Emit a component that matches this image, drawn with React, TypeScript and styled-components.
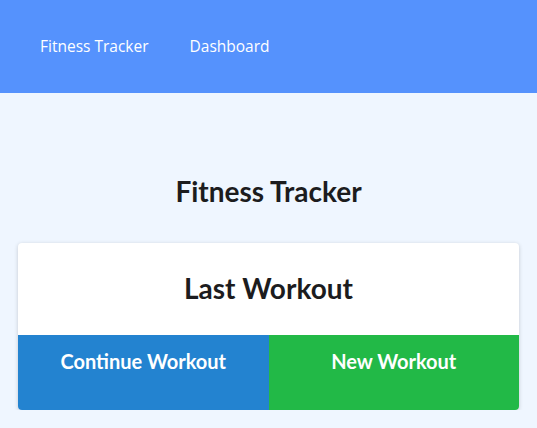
import React from "react";
import styled, { createGlobalStyle } from "styled-components";

const Global = createGlobalStyle`
  html, body { margin: 0; padding: 0; }
  body { background: #eff6ff; font-family: Lato, "Open Sans", sans-serif; color: #1c1c1e; }
`;

const Nav = styled.nav`
  height: 93px;
  background: #5592fd;
  display: flex;
  align-items: center;
  padding: 0 40px 2px;
  gap: 41px;
  box-sizing: border-box;
`;

const NavLink = styled.a`
  font-family: "Open Sans", sans-serif;
  font-size: 15.5px;
  color: #ffffff;
  text-decoration: none;
`;

const Main = styled.main`
  padding: 78px 18px 0;
  display: flex;
  flex-direction: column;
  align-items: center;
`;

const Title = styled.h1`
  margin: 0 0 32px;
  font-size: 28px;
  font-weight: 700;
  line-height: 40px;
`;

const Card = styled.section`
  width: 100%;
  background: #fff;
  border-radius: 4px;
  box-shadow: 0 1px 4px rgba(0, 0, 0, 0.18);
  overflow: hidden;
`;

const CardHeader = styled.h2`
  margin: 0;
  height: 92px;
  padding-bottom: 2px;
  box-sizing: border-box;
  display: flex;
  align-items: center;
  justify-content: center;
  font-size: 28px;
  font-weight: 700;
`;

const Actions = styled.div`
  display: grid;
  grid-template-columns: 1fr 1fr;
`;

const ActionButton = styled.button<{ $bg: string }>`
  border: none;
  background: ${(p) => p.$bg};
  color: #fff;
  font-family: Lato, sans-serif;
  font-weight: 700;
  font-size: 20px;
  height: 75px;
  padding: 14px 0 0;
  display: flex;
  justify-content: center;
  align-items: flex-start;
  cursor: pointer;
`;

export default function App() {
  return (
    <>
      <Global />
      <Nav>
        <NavLink href="#">Fitness Tracker</NavLink>
        <NavLink href="#">Dashboard</NavLink>
      </Nav>
      <Main>
        <Title>Fitness Tracker</Title>
        <Card>
          <CardHeader>Last Workout</CardHeader>
          <Actions>
            <ActionButton $bg="#2383d0">Continue Workout</ActionButton>
            <ActionButton $bg="#22b947">New Workout</ActionButton>
          </Actions>
        </Card>
      </Main>
    </>
  );
}
